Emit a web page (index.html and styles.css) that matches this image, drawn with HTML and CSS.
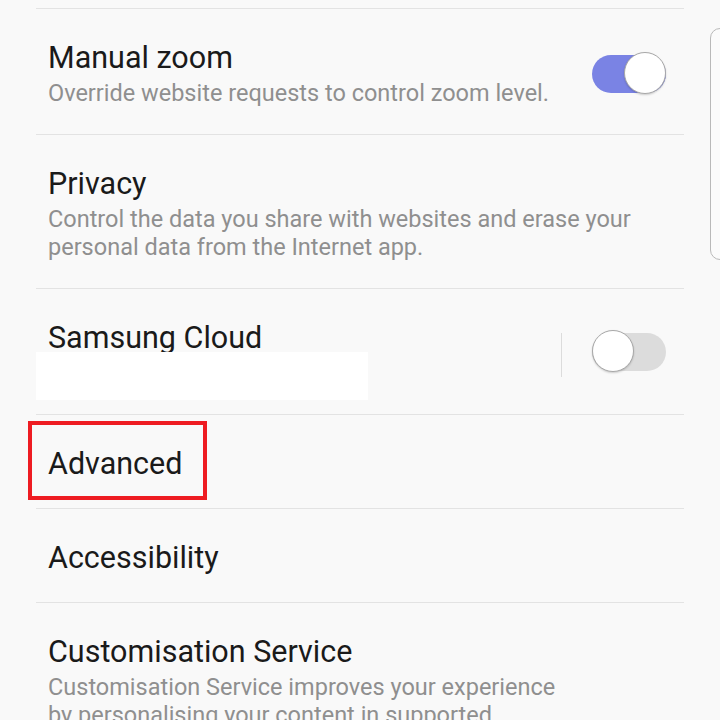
FILE: index.html
```html
<!DOCTYPE html>
<html>
<head>
<meta charset="utf-8">
<link rel="stylesheet" href="styles.css">
</head>
<body>
<div class="screen">
  <div class="list">
    <div class="row">
      <div class="text">
        <div class="title">Manual zoom</div>
        <div class="sub">Override website requests to control zoom level.</div>
      </div>
      <div class="switch on"><span class="knob"></span></div>
    </div>
    <div class="row">
      <div class="text">
        <div class="title">Privacy</div>
        <div class="sub">Control the data you share with websites and erase your personal data from the Internet app.</div>
      </div>
    </div>
    <div class="row">
      <div class="text">
        <div class="title">Samsung Cloud</div>
        <div class="sub redacted"><span class="mask"></span></div>
      </div>
      <div class="vsep"></div>
      <div class="switch off"><span class="knob"></span></div>
    </div>
    <div class="row">
      <div class="text">
        <div class="title highlighted">Advanced<span class="redbox"></span></div>
      </div>
    </div>
    <div class="row">
      <div class="text">
        <div class="title">Accessibility</div>
      </div>
    </div>
    <div class="row">
      <div class="text">
        <div class="title">Customisation Service</div>
        <div class="sub">Customisation Service improves your experience by personalising your content in supported<br>apps.</div>
      </div>
    </div>
  </div>
  <div class="side-panel"></div>
</div>
</body>
</html>
```

FILE: styles.css
```css
html, body {
  margin: 0;
  padding: 0;
  background: #f9f9f9;
}
.screen {
  position: relative;
  width: 720px;
  height: 720px;
  overflow: hidden;
  font-family: Roboto, "Noto Sans", sans-serif;
}
.list {
  margin-top: 8px;
  padding: 0 36px;
}
.row {
  display: flex;
  align-items: center;
  border-top: 1px solid #e3e3e3;
  padding: 31px 18px 25px 12px;
}
.text {
  flex: 1;
  min-width: 0;
}
.title {
  font-size: 30.5px;
  line-height: 36px;
  color: #1a1a1a;
  padding-bottom: 1px;
}
.sub {
  margin-top: 2px;
  margin-bottom: 2px;
  font-size: 23.5px;
  line-height: 28px;
  color: #8f8f8f;
  max-width: 600px;
}
.row:last-child .sub { max-width: 520px; }
.redacted {
  position: relative;
  height: 28px;
}
.mask {
  position: absolute;
  left: -12px;
  top: -7px;
  width: 332px;
  height: 48px;
  background: #ffffff;
}
.highlighted {
  position: relative;
  display: inline-block;
}
.redbox {
  position: absolute;
  left: -20px;
  top: -25px;
  width: 171px;
  height: 71px;
  border: 4px solid #ee1c22;
}
.vsep {
  width: 1px;
  height: 44px;
  background: #dcdcdc;
  margin-right: 30px;
}
.switch {
  position: relative;
  width: 74px;
  height: 38px;
  border-radius: 19px;
  flex: none;
  margin-top: -2px;
}
.switch.on { background: #7a83e4; }
.switch.off { background: #dcdcdc; margin-top: -6px; }
.knob {
  position: absolute;
  top: -3px;
  width: 42px;
  height: 42px;
  border-radius: 50%;
  background: #ffffff;
  border: 1px solid #a8a8a8;
  box-sizing: border-box;
  box-shadow: 0 1px 2px rgba(0,0,0,0.18);
}
.switch.on .knob { right: 0; }
.switch.off .knob { left: 0; }
.side-panel {
  position: absolute;
  left: 710px;
  top: 28px;
  width: 40px;
  height: 230px;
  border: 1.5px solid #b9b9b9;
  border-radius: 10px;
  background: #fbfbfb;
}
```
